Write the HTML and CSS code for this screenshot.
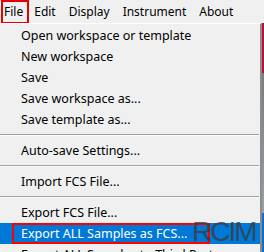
FILE: index.html
```html
<!DOCTYPE html>
<html lang="en">
<head>
<meta charset="UTF-8" />
<title>File menu</title>
<link rel="stylesheet" href="styles.css">
</head>
<body>

<div class="screen">
  <!-- Top menu bar -->
  <div class="menubar">
    <span class="top-item marked">File</span>
    <span class="top-item">Edit</span>
    <span class="top-item">Display</span>
    <span class="top-item">Instrument</span>
    <span class="top-item">About</span>
  </div>

  <div class="below">
    <!-- Open File menu -->
    <div class="dropdown">
      <div class="entry">Open workspace or template</div>
      <div class="entry">New workspace</div>
      <div class="entry">Save</div>
      <div class="entry">Save workspace as...</div>
      <div class="entry">Save template as...</div>
      <div class="sep"></div>
      <div class="entry">Auto-save Settings...</div>
      <div class="sep"></div>
      <div class="entry">Import FCS File...</div>
      <div class="sep"></div>
      <div class="entry">Export FCS File...</div>
      <div class="entry active"><span class="mark">Export ALL Samples as FCS...</span></div>
      <div class="entry">Export ALL Samples to Third Party...</div>
    </div>
    <div class="behind"></div>
  </div>

  <div class="watermark">RCIM</div>
</div>

</body>
</html>
```

FILE: styles.css
```css
body {
  margin: 0;
  background: #f0f0f0;
  font-family: "Noto Sans", "Open Sans", sans-serif;
  font-size: 12.5px;
  color: #000;
}
.screen {
  position: relative;
  width: 264px;
  height: 252px;
  overflow: hidden;
}
.menubar {
  display: flex;
  height: 23px;
  padding-left: 1px;
  align-items: center;
  background: #f0f0f0;
}
.top-item {
  font-size: 12px;
  line-height: 20px;
  margin-right: 13px;
}
.top-item.marked {
  margin-right: 5px;
  padding: 0 4px 0 1px;
  line-height: 20px;
  border: 2px solid #e60000;
}
.below {
  display: flex;
  height: 229px;
}
.dropdown {
  width: 260px;
  background: #f0f0f0;
  border-top: 1px solid #fdfdfd;
  border-right: 2px solid #8c8c8c;
  padding-top: 1px;
}
.behind {
  flex: 1;
  background: linear-gradient(#b3123a 0, #b3123a 50px, #7b7b7b 50px, #9aa0a8 190px, #0a6fc8 190px);
}
.entry {
  height: 21px;
  line-height: 21px;
  padding-left: 21px;
  white-space: nowrap;
}
.entry.active {
  background: #0078d7;
  color: #fff;
  padding-left: 12px;
}
.mark {
  display: inline-block;
  box-sizing: border-box;
  width: 198px;
  height: 21px;
  line-height: 17px;
  padding-left: 7px;
  border: 2px solid #ff0000;
}
.sep {
  height: 10px;
  background: linear-gradient(transparent 4px, #a0a0a0 4px, #a0a0a0 5px, #fcfcfc 5px, #fcfcfc 6px, transparent 6px);
  margin-right: 1px;
}
.watermark {
  position: absolute;
  left: 192px;
  top: 216px;
  font-family: "Liberation Sans", Arial, sans-serif;
  font-size: 28px;
  line-height: 32px;
  color: rgba(60, 60, 60, 0.8);
  letter-spacing: -2px;
}
```
